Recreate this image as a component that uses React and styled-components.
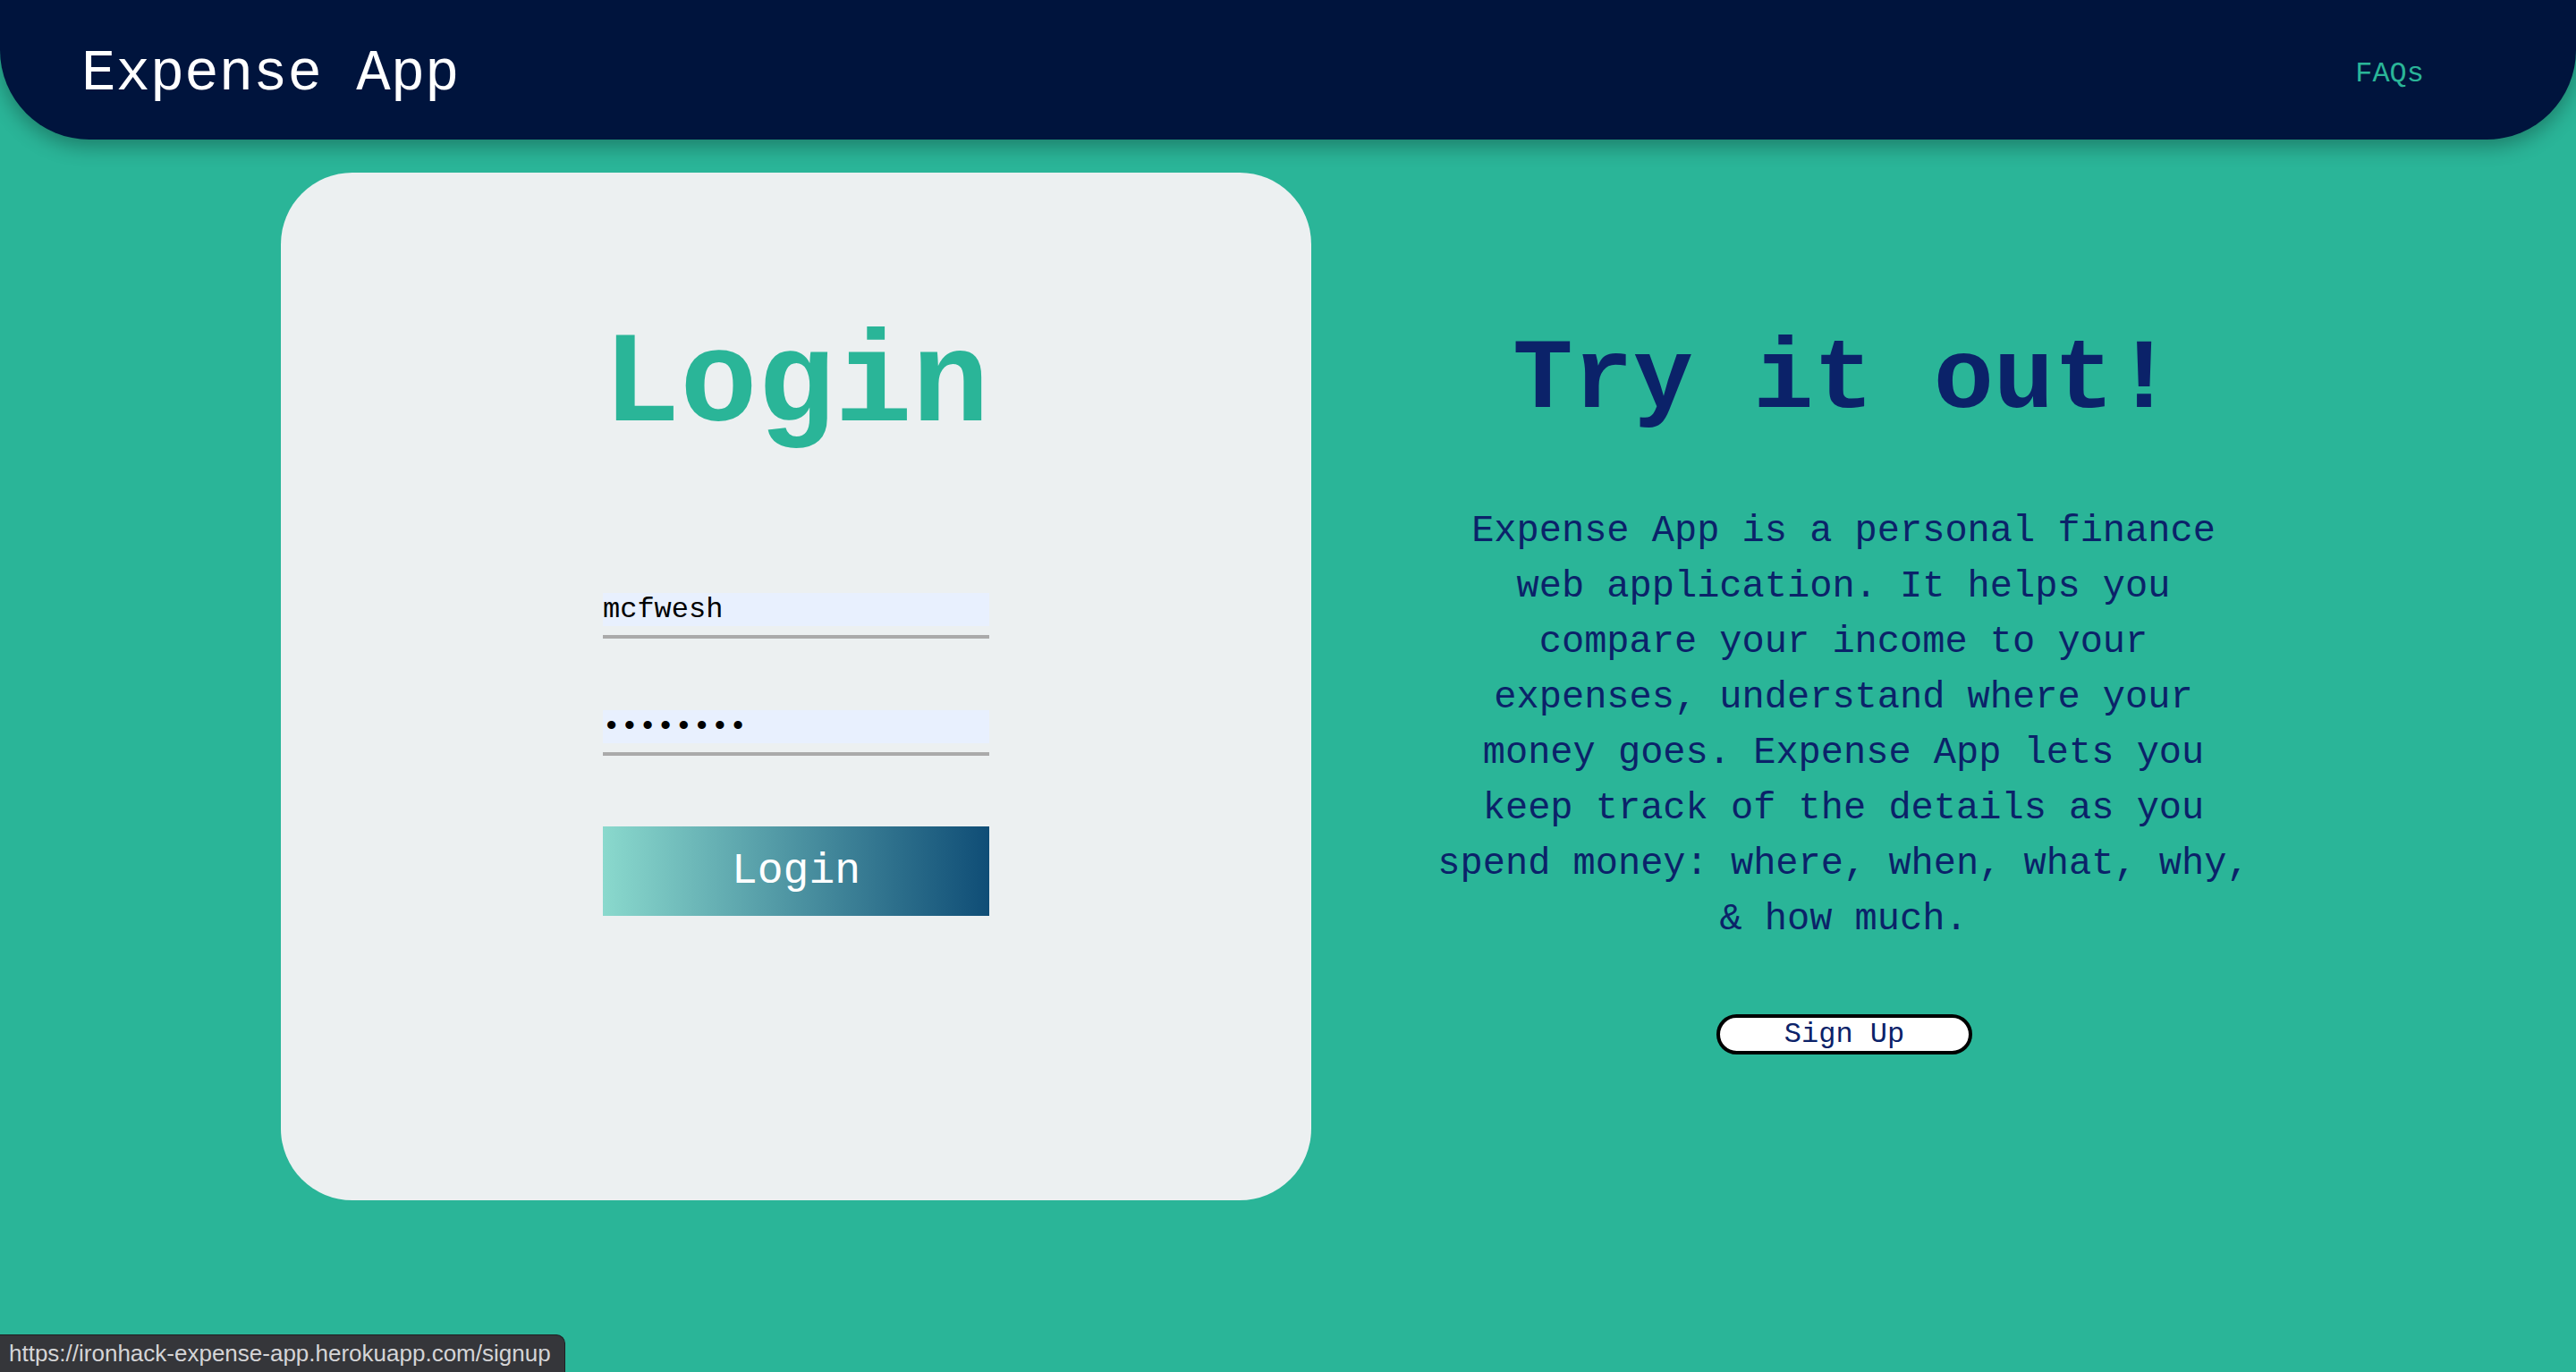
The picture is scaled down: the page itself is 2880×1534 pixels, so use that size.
import React from "react";
import styled, { createGlobalStyle } from "styled-components";

const MONO = `"Courier New", Courier, "Nimbus Mono PS", "Nimbus Mono L", FreeMono, "Liberation Mono", monospace`;

const GlobalStyle = createGlobalStyle`
  html, body {
    margin: 0;
    padding: 0;
  }
  body {
    background: #2ab598;
    font-family: ${MONO};
  }
`;

const Page = styled.div`
  min-height: 100vh;
  background: #2ab598;
`;

const NavBar = styled.header`
  height: 156px;
  box-sizing: border-box;
  padding: 10px 170px 0 91px;
  display: flex;
  align-items: center;
  justify-content: space-between;
  background: #00143d;
  border-radius: 0 0 100px 100px;
  box-shadow: 0 8px 22px rgba(0, 0, 0, 0.3);
`;

const Brand = styled.h1`
  margin: 0;
  font-size: 64px;
  line-height: 64px;
  font-weight: normal;
  color: #ffffff;
`;

const NavLink = styled.a`
  font-size: 32px;
  line-height: 32px;
  color: #2ab598;
  text-decoration: none;
`;

const Main = styled.main`
  display: flex;
  align-items: flex-start;
  gap: 19px;
  padding: 37px 0 0 314px;
`;

const Card = styled.section`
  width: 1152px;
  height: 1149px;
  box-sizing: border-box;
  padding-top: 167px;
  background: #ecf0f1;
  border-radius: 80px;
  display: flex;
  flex-direction: column;
  align-items: center;
`;

const LoginTitle = styled.h2`
  margin: 0 0 159px;
  font-size: 144px;
  line-height: 144px;
  font-weight: bold;
  color: #2ab598;
`;

const Form = styled.form`
  width: 432px;
  display: flex;
  flex-direction: column;
`;

const Field = styled.div`
  padding-bottom: 10px;
  border-bottom: 4px solid #aaaaaa;
  margin-bottom: ${(p) => p.$gap}px;
`;

const Input = styled.input`
  display: block;
  width: 100%;
  height: 37px;
  box-sizing: border-box;
  padding: 0;
  border: none;
  outline: none;
  background: #e8f0fe;
  font-family: ${MONO};
  font-size: 32px;
  font-weight: ${(p) => (p.type === "password" ? "bold" : "normal")};
  letter-spacing: ${(p) => (p.type === "password" ? "1px" : "0")};
  line-height: 37px;
  color: #000000;
`;

const SubmitButton = styled.button`
  height: 100px;
  border: none;
  padding: 0;
  background: linear-gradient(to right, #8ad9cd, #0f4d76);
  color: #ffffff;
  font-family: ${MONO};
  font-size: 48px;
  line-height: 100px;
  cursor: pointer;
`;

const Promo = styled.section`
  width: 1152px;
  padding-top: 177px;
  display: flex;
  flex-direction: column;
  align-items: center;
  color: #0b2269;
`;

const PromoTitle = styled.h2`
  margin: 0 0 81px;
  font-size: 112px;
  line-height: 112px;
  font-weight: bold;
`;

const PromoText = styled.p`
  margin: 0 0 75px;
  width: 920px;
  text-align: center;
  font-size: 42px;
  line-height: 62px;
`;

const SignUpButton = styled.a`
  width: 286px;
  height: 45px;
  box-sizing: border-box;
  margin-left: 2px;
  border: 4px solid #000000;
  border-radius: 30px;
  background: #ffffff;
  color: #0b2269;
  font-size: 32px;
  line-height: 37px;
  text-align: center;
  text-decoration: none;
`;

const StatusTip = styled.div`
  position: fixed;
  left: 0;
  bottom: 0;
  height: 42px;
  padding: 0 15px 0 10px;
  box-sizing: border-box;
  background: #35363a;
  border-top: 1px solid #1e1f22;
  border-right: 1px solid #1e1f22;
  border-radius: 0 10px 0 0;
  color: #d4d4d6;
  font-family: "Liberation Sans", Arial, sans-serif;
  font-size: 26px;
  line-height: 41px;
`;

export default function App() {
  return (
    <Page>
      <GlobalStyle />
      <NavBar>
        <Brand>Expense App</Brand>
        <NavLink href="#faqs">FAQs</NavLink>
      </NavBar>

      <Main>
        <Card>
          <LoginTitle>Login</LoginTitle>
          <Form onSubmit={(e) => e.preventDefault()}>
            <Field $gap={80}>
              <Input type="text" defaultValue="mcfwesh" />
            </Field>
            <Field $gap={79}>
              <Input type="password" defaultValue="password" />
            </Field>
            <SubmitButton type="submit">Login</SubmitButton>
          </Form>
        </Card>

        <Promo>
          <PromoTitle>Try it out!</PromoTitle>
          <PromoText>
            Expense App is a personal finance web application. It helps you
            compare your income to your expenses, understand where your money
            goes. Expense App lets you keep track of the details as you spend
            money: where, when, what, why, &amp; how much.
          </PromoText>
          <SignUpButton href="#signup">Sign Up</SignUpButton>
        </Promo>
      </Main>

      <StatusTip>https://ironhack-expense-app.herokuapp.com/signup</StatusTip>
    </Page>
  );
}
